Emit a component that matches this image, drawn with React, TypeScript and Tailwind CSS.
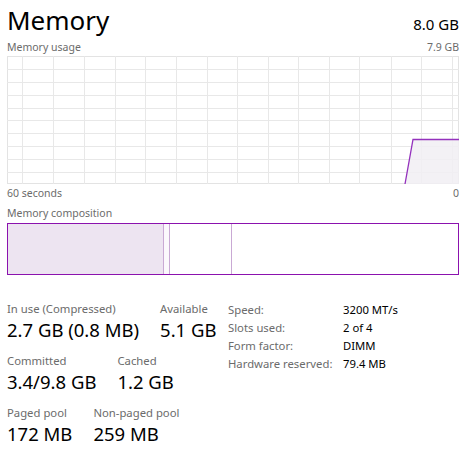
const font = { fontFamily: '"Noto Sans", "Open Sans", sans-serif' };

const vLines = [15, 46, 77, 108, 138, 169, 200, 230, 261, 291, 322, 352, 384, 414, 445];
const hLines = [13, 26, 39, 52, 64, 77, 90, 103, 116];

const UsageGraph = () => (
  <svg width="452" height="128" viewBox="0 0 452 128" className="block">
    <rect x="0.5" y="0.5" width="451" height="127" fill="#ffffff" stroke="#e3e3e3" />
    {vLines.map((x) => (
      <line key={`v${x}`} x1={x + 0.5} y1="0" x2={x + 0.5} y2="128" stroke="#e8e8e8" />
    ))}
    {hLines.map((y) => (
      <line key={`h${y}`} x1="0" y1={y + 0.5} x2="452" y2={y + 0.5} stroke="#e8e8e8" />
    ))}
    <polygon points="398,128 406,83.5 452,83.5 452,128" fill="#f1eef3" fillOpacity="0.85" />
    <polyline points="398,128 406,83.5 452,83.5" fill="none" stroke="#9431bd" strokeWidth="1.3" />
  </svg>
);

const Stat = ({ label, value }: { label: string; value: string }) => (
  <div className="flex flex-col">
    <div className="text-[11.3px] leading-[16px] text-[#6b6b6b]">{label}</div>
    <div className="text-[18.5px] leading-[24px] text-black mt-[1px]">{value}</div>
  </div>
);

const specs = [
  ['Speed:', '3200 MT/s'],
  ['Slots used:', '2 of 4'],
  ['Form factor:', 'DIMM'],
  ['Hardware reserved:', '79.4 MB'],
];

export default function App() {
  return (
    <div className="w-[469px] h-[455px] bg-white overflow-hidden pl-[7px]" style={font}>
      <div className="w-[452px] flex items-baseline justify-between pt-[1px]">
        <h1 className="text-[26px] leading-[38px] text-black font-normal">Memory</h1>
        <span className="text-[15px] text-black">8.0 GB</span>
      </div>
      <div className="w-[452px] flex justify-between text-[10.5px] leading-[14px] text-[#6b6b6b] mt-[1px]">
        <span>Memory usage</span>
        <span>7.9 GB</span>
      </div>
      <div className="mt-[2px]">
        <UsageGraph />
      </div>
      <div className="w-[452px] flex justify-between text-[10.5px] leading-[14px] text-[#6b6b6b] mt-[2px]">
        <span>60 seconds</span>
        <span>0</span>
      </div>
      <div className="text-[10.5px] leading-[14px] text-[#6b6b6b] mt-[6px]">Memory composition</div>
      <div className="w-[452px] h-[52px] mt-[3px] border border-[#8b12ae] flex">
        <div className="w-[156px] h-full bg-[#ede4f1] border-r border-[#c9a9d4]" />
        <div className="w-[6px] h-full bg-[#fbf8fc] border-r border-[#c9a9d4]" />
        <div className="w-[62px] h-full border-r border-[#c9a9d4]" />
        <div className="flex-1 h-full" />
      </div>
      <div className="flex mt-[26px]">
        <div className="w-[221px] flex flex-col gap-[11px]">
          <div className="flex gap-[21px]">
            <Stat label="In use (Compressed)" value="2.7 GB (0.8 MB)" />
            <Stat label="Available" value="5.1 GB" />
          </div>
          <div className="flex gap-[21px]">
            <Stat label="Committed" value="3.4/9.8 GB" />
            <Stat label="Cached" value="1.2 GB" />
          </div>
          <div className="flex gap-[21px]">
            <Stat label="Paged pool" value="172 MB" />
            <Stat label="Non-paged pool" value="259 MB" />
          </div>
        </div>
        <div className="flex flex-col">
          {specs.map(([k, v]) => (
            <div key={k} className="flex text-[11.3px] leading-[18px]">
              <span className="w-[115px] text-[#6b6b6b]">{k}</span>
              <span className="text-black">{v}</span>
            </div>
          ))}
        </div>
      </div>
    </div>
  );
}
